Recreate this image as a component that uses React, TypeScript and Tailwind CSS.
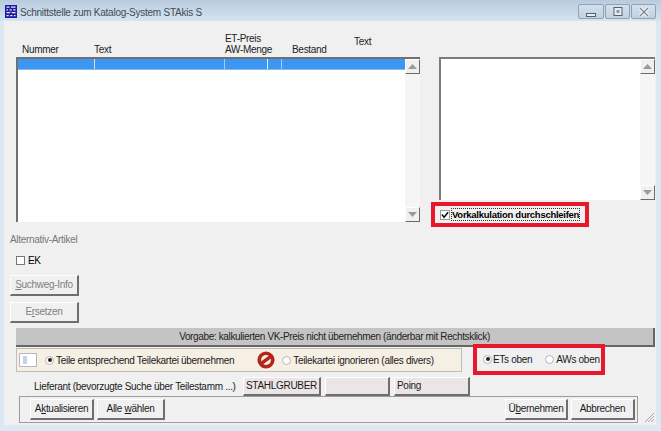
import React from "react";

const FONT = "font-['Liberation_Sans',Arial,sans-serif]";

function AppIcon() {
  return (
    <svg width="12" height="13" viewBox="0 0 16 16" className="shrink-0" preserveAspectRatio="none">
      <rect width="16" height="16" fill="#1c1ca8" />
      <path d="M2 2.500h4M8 2.500h6M2 6h2M6 6h3M11 6h3M2 9.500h5M9 9.500h5M2 13h3M7 13h3M12 13h2" stroke="#e4e8ff" strokeWidth="1.500" />
      <rect x="6" y="7" width="3" height="2" fill="#c8282a" />
    </svg>
  );
}

function CaptionButton({ kind, className }: { kind: "min" | "max" | "close"; className: string }) {
  return (
    <div className={`h-[15px] flex items-center justify-center rounded-[2px] border border-[#8fa3b6] bg-gradient-to-b from-[#d4e1ec] to-[#c0d1e0] ${className}`}>
      <svg width="14" height="12" viewBox="0 0 14 12">
        {kind === "min" && <rect x="2.500" y="7.500" width="9" height="3" fill="#e8eef4" stroke="#56606c" />}
        {kind === "max" && (
          <>
            <rect x="3" y="1.500" width="8" height="8" fill="#e8eef4" stroke="#56606c" />
            <rect x="5.500" y="4" width="3" height="3" fill="#8c98a4" />
          </>
        )}
        {kind === "close" && <path d="M3 2l8 8M11 2l-8 8" stroke="#f4f7fa" strokeWidth="3.500" />}
        {kind === "close" && <path d="M3 2l8 8M11 2l-8 8" stroke="#7c8692" strokeWidth="1.300" fill="none" />}
      </svg>
    </div>
  );
}

function ScrollArrow({ up }: { up?: boolean }) {
  return (
    <div className="h-[15px] w-[15px] flex items-center justify-center bg-[#f0f0f0] border-t border-l border-t-white border-l-white border-r border-b border-r-[#6a6a6a] border-b-[#6a6a6a]">
      <svg width="9" height="5" viewBox="0 0 9 5">
        <path d={up ? "M4.500 0L9 5H0z" : "M0 0h9L4.500 5z"} fill="#9a9a9a" />
      </svg>
    </div>
  );
}

function ScrollBar() {
  return (
    <div className="w-[15px] shrink-0 flex flex-col justify-between bg-[#f5f5f5]">
      <ScrollArrow up />
      <ScrollArrow />
    </div>
  );
}

function Btn({ children, className, muted }: { children?: React.ReactNode; className: string; muted?: boolean }) {
  return (
    <div className={`flex shrink-0 items-center justify-center whitespace-nowrap text-[10px] leading-none border-t border-l border-t-white border-l-white border-r-2 border-b-2 border-r-[#6e6e6e] border-b-[#6e6e6e] ${muted ? "text-[#808080]" : "text-[#1a1a1a]"} ${className}`}>
      {children}
    </div>
  );
}

function Radio({ on }: { on?: boolean }) {
  return (
    <span className="relative inline-block h-[9px] w-[9px] rounded-full bg-white border border-[#b4b4b4] shrink-0">
      {on && <span className="absolute left-[1.500px] top-[1.500px] h-[4px] w-[4px] rounded-full bg-[#222]" />}
    </span>
  );
}

function StopIcon() {
  return (
    <svg width="18" height="18" viewBox="0 0 20 20" className="shrink-0">
      <circle cx="10" cy="10" r="9.500" fill="#b3261a" />
      <circle cx="10" cy="10" r="5.500" fill="#f4ece4" />
      <path d="M4.500 14L15.500 6" stroke="#b3261a" strokeWidth="4" />
    </svg>
  );
}

export default function App() {
  return (
    <div className={`${FONT} flex h-[431px] w-[661px] flex-col overflow-hidden bg-[#dce9f5] tracking-[-0.3px] text-[#1a1a1a]`}>
      {/* Titelleiste */}
      <div className="flex h-[21px] shrink-0 items-start bg-gradient-to-b from-[#b8cbdd] to-[#d6e4f1] pl-[5px] pr-[5px] pt-[4px]">
        <span className="mt-px flex">
          <AppIcon />
        </span>
        <span className="ml-[3px] text-[10px] leading-[17px] tracking-[-0.25px] text-[#444c55]">Schnittstelle zum Katalog-System STAkis S</span>
        <div className="ml-auto flex gap-px">
          <CaptionButton kind="min" className="w-[26px]" />
          <CaptionButton kind="max" className="w-[25px]" />
          <CaptionButton kind="close" className="w-[25px]" />
        </div>
      </div>

      <div className="ml-[4px] mr-[5px] mb-[6px] flex min-h-0 flex-1 flex-col bg-[#f0f0f0] pl-[6px]">
        {/* Listen */}
        <div className="flex h-[206px] shrink-0">
          <div className="flex w-[410px] shrink-0 flex-col pl-[6px]">
            <div className="grid h-[36px] shrink-0 grid-cols-[72px_131px_67px_62px_auto] items-end pb-[2px] pl-[6px] text-[10px] leading-[11px] text-[#222]">
              <span>Nummer</span>
              <span>Text</span>
              <span className="whitespace-nowrap">
                ET-Preis
                <br />
                AW-Menge
              </span>
              <span>Bestand</span>
              <span className="relative -top-[8px]">Text</span>
            </div>
            <div className="flex h-[165px] border-l-2 border-t-2 border-l-[#707070] border-t-[#707070] bg-white">
              <div className="min-w-0 flex-1">
                <div className="grid h-[11px] grid-cols-[77px_130px_43px_14px_1fr] bg-[#3c96f4] border-b border-[#8ab8e0]">
                  <span className="border-r border-[#cfe2f6]" />
                  <span className="border-r border-[#a8cdf2]" />
                  <span className="border-r border-[#e6f0fa]" />
                  <span className="border-r border-[#a8cdf2]" />
                  <span />
                </div>
              </div>
              <ScrollBar />
            </div>
          </div>
          <div className="ml-[19px] flex w-[216px] shrink-0 flex-col pt-[36px]">
            <div className="flex h-[143px] shrink-0 border-l-2 border-t-2 border-l-[#7c7c7c] border-t-[#7c7c7c] bg-white">
              <div className="flex-1" />
              <ScrollBar />
            </div>
            <div className="-ml-[8px] mt-[2px] flex h-[25px] w-[158px] shrink-0 items-center border-[4px] border-[#e8182c] pl-[5px]">
              <span className="flex h-[10px] w-[10px] shrink-0 items-center justify-center border border-[#999] bg-white">
                <svg width="8" height="8" viewBox="0 0 9 9">
                  <path d="M1 4l2.500 3L8 1.500" fill="none" stroke="#111" strokeWidth="1.800" />
                </svg>
              </span>
              <span className="ml-px whitespace-nowrap border border-dotted border-[#333] text-[9.500px] font-bold leading-[11px] tracking-[-0.27px] text-black">Vorkalkulation durchschleifen</span>
            </div>
          </div>
        </div>

        <div className="mt-[7px] text-[10px] leading-[12px] text-[#777]">Alternativ-Artikel</div>

        <div className="mt-[9px] ml-[6px] flex h-[11px] items-center gap-[3px]">
          <span className="h-[9px] w-[9px] border border-[#777] bg-white" />
          <span className="text-[10px] leading-none text-black">EK</span>
        </div>

        <Btn muted className="mt-[9px] h-[21px] w-[69px]">
          <span>
            <u>S</u>uchweg-Info
          </span>
        </Btn>
        <Btn muted className="mt-[6px] h-[21px] w-[69px]">
          <span>
            E<u>r</u>setzen
          </span>
        </Btn>

        {/* Vorgabe */}
        <div className="ml-[6px] mt-[5px] flex h-[19px] w-[639px] shrink-0 items-center justify-center border-r-2 border-b-2 border-r-[#666] border-b-[#666] bg-[#c4c4c4] text-[10px] tracking-[-0.36px] text-[#222]">
          Vorgabe: kalkulierten VK-Preis nicht übernehmen (änderbar mit Rechtsklick)
        </div>

        {/* Teilekartei */}
        <div className="ml-[6px] mt-[1px] flex h-[24px] shrink-0 items-center">
          <div className="flex h-[24px] w-[446px] shrink-0 items-center border border-[#bdbdbd] bg-[#f6efe3] pl-[2px] text-[10px]">
            <span className="flex h-[14px] w-[18px] shrink-0 border border-[#b4b4c4] bg-white">
              <span className="ml-[3px] mt-[2px] h-[8px] w-[4px] bg-[#c4d4e8]" />
            </span>
            <span className="ml-[8px] flex">
              <Radio on />
            </span>
            <span className="ml-[2px] whitespace-nowrap">Teile entsprechend Teilekartei übernehmen</span>
            <span className="ml-[23px] flex">
              <StopIcon />
            </span>
            <span className="ml-[7px] flex">
              <Radio />
            </span>
            <span className="ml-[2px] whitespace-nowrap">Teilekartei ignorieren (alles divers)</span>
          </div>
          <div className="relative -top-[1px] ml-[11px] flex h-[31px] w-[132px] shrink-0 items-center border-[4px] border-[#e8182c] pl-[6px] text-[10px]">
            <Radio on />
            <span className="ml-[1px] whitespace-nowrap">ETs oben</span>
            <span className="ml-[13px] flex">
              <Radio />
            </span>
            <span className="ml-[2px] whitespace-nowrap">AWs oben</span>
          </div>
        </div>

        {/* Lieferant */}
        <div className="mt-[5px] flex h-[19px] shrink-0 items-center text-[10px]">
          <span className="ml-[24px] w-[209px] shrink-0 whitespace-nowrap">Lieferant (bevorzugte Suche über Teilestamm ...)</span>
          <Btn className="h-[19px] w-[78px] bg-[#ece5e5]">STAHLGRUBER</Btn>
          <Btn className="ml-[4px] h-[19px] w-[65px] bg-[#ece5e5]" />
          <Btn className="ml-[4px] h-[19px] w-[76px] justify-start! bg-[#ece5e5] pl-[2px]">Poing</Btn>
        </div>

        {/* Aktionen */}
        <div className="relative ml-[9px] flex h-[27px] w-[619px] shrink-0 items-start border border-[#9c9c9c] pl-[10px] pt-[2px]">
          <Btn className="h-[21px] w-[64px]">
            <span>
              A<u>k</u>tualisieren
            </span>
          </Btn>
          <Btn className="ml-[3px] h-[21px] w-[68px]">
            <span>
              Alle <u>w</u>ählen
            </span>
          </Btn>
          <Btn className="ml-auto h-[21px] w-[63px]">
            <span>
              Ü<u>b</u>ernehmen
            </span>
          </Btn>
          <Btn className="ml-[3px] mr-[2px] h-[21px] w-[64px]">Abbrechen</Btn>
          <svg width="10" height="10" viewBox="0 0 10 10" className="absolute -right-[17px] bottom-0">
            <path d="M1 10L10 1M4 10l6-6M7 10l3-3" stroke="#a8a8a8" strokeWidth="1" />
          </svg>
        </div>
      </div>
    </div>
  );
}
